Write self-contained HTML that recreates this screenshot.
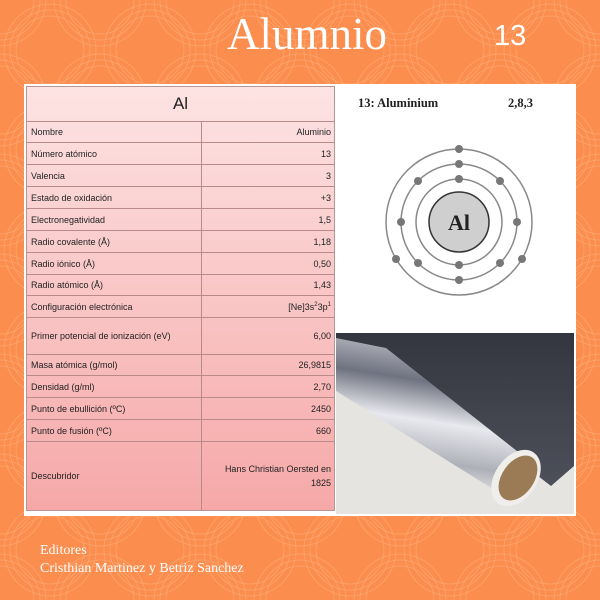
<!DOCTYPE html>
<html><head><meta charset="utf-8"><style>
*{margin:0;padding:0;box-sizing:border-box}
body{width:600px;height:600px;overflow:hidden;background:#fb8e4e;position:relative;font-family:"Liberation Sans",sans-serif}
.bg{position:absolute;inset:0}
.t{position:absolute;color:#fff;font-family:"Liberation Serif",serif}
.panel{position:absolute;left:24px;top:84px;width:552px;height:432px;background:#fff}
.tbl{position:absolute;left:26px;top:86px;width:309px;height:425px;background:linear-gradient(#fde3e3,#f6a8a8);border:1px solid #b79595}
.r{position:absolute;left:0;width:307px;border-top:1px solid #b98a8a;font-size:9px;color:#222}
.r span{position:absolute;top:50%;transform:translateY(-50%)}
.r .a{left:4px}.r .b{right:3px;text-align:right}
.div{position:absolute;left:174px;top:35px;bottom:0;border-left:1px solid #b98a8a}
</style></head><body>
<svg class="bg" width="600" height="600">
<defs><pattern id="p" width="100" height="100" patternUnits="userSpaceOnUse">
<g fill="none" stroke="#fca46d" stroke-width="0.8">
<circle cx="50" cy="50" r="34"/><circle cx="50" cy="50" r="40"/><circle cx="50" cy="50" r="46"/>
<circle cx="0" cy="0" r="34"/><circle cx="0" cy="0" r="40"/><circle cx="0" cy="0" r="46"/>
<circle cx="100" cy="0" r="34"/><circle cx="100" cy="0" r="40"/><circle cx="100" cy="0" r="46"/>
<circle cx="0" cy="100" r="34"/><circle cx="0" cy="100" r="40"/><circle cx="0" cy="100" r="46"/>
<circle cx="100" cy="100" r="34"/><circle cx="100" cy="100" r="40"/><circle cx="100" cy="100" r="46"/>
</g></pattern></defs>
<rect width="600" height="600" fill="url(#p)"/>
</svg>
<div class="t" style="left:227px;top:8px;font-size:45px">Alumnio</div>
<div class="t" style="left:494px;top:20px;font-size:29px;font-family:'Liberation Sans',sans-serif">13</div>
<div class="panel"></div>
<div class="tbl">
<div style="position:absolute;left:0;width:307px;top:0;height:34px;text-align:center;font-size:17px;line-height:34px;color:#222">Al</div>
<div class="div"></div>
<div class="r" style="top:34px;height:21px"><span class="a">Nombre</span><span class="b">Aluminio</span></div>
<div class="r" style="top:55px;height:22px"><span class="a">Número  atómico</span><span class="b">13</span></div>
<div class="r" style="top:77px;height:22px"><span class="a">Valencia</span><span class="b">3</span></div>
<div class="r" style="top:99px;height:22px"><span class="a">Estado de oxidación</span><span class="b">+3</span></div>
<div class="r" style="top:121px;height:22px"><span class="a">Electronegatividad</span><span class="b">1,5</span></div>
<div class="r" style="top:143px;height:22px"><span class="a">Radio covalente (Å)</span><span class="b">1,18</span></div>
<div class="r" style="top:165px;height:22px"><span class="a">Radio iónico (Å)</span><span class="b">0,50</span></div>
<div class="r" style="top:187px;height:21px"><span class="a">Radio atómico (Å)</span><span class="b">1,43</span></div>
<div class="r" style="top:208px;height:22px"><span class="a">Configuración electrónica</span><span class="b">[Ne]3s<sup style="font-size:6px">2</sup>3p<sup style="font-size:6px">1</sup></span></div>
<div class="r" style="top:230px;height:37px"><span class="a">Primer potencial de ionización (eV)</span><span class="b">6,00</span></div>
<div class="r" style="top:267px;height:21px"><span class="a">Masa atómica (g/mol)</span><span class="b">26,9815</span></div>
<div class="r" style="top:288px;height:22px"><span class="a">Densidad (g/ml)</span><span class="b">2,70</span></div>
<div class="r" style="top:310px;height:22px"><span class="a">Punto de ebullición (ºC)</span><span class="b">2450</span></div>
<div class="r" style="top:332px;height:22px"><span class="a">Punto de fusión (ºC)</span><span class="b">660</span></div>
<div class="r" style="top:354px;height:69px"><span class="a">Descubridor</span><span class="b" style="width:120px;line-height:14px">Hans Christian Oersted en 1825</span></div>
</div>
<svg style="position:absolute;left:336px;top:86px" width="238" height="428">
<text x="22" y="21" font-family="Liberation Serif" font-weight="bold" font-size="12.5" fill="#222">13: Aluminium</text>
<text x="172" y="21" font-family="Liberation Serif" font-weight="bold" font-size="12.5" fill="#222">2,8,3</text>
<g fill="none" stroke="#888" stroke-width="1.5"><circle cx="123" cy="136" r="43"/><circle cx="123" cy="136" r="58"/><circle cx="123" cy="136" r="73"/></g>
<circle cx="123" cy="136" r="30" fill="#cfcfcf" stroke="#333" stroke-width="1.5"/>
<text x="123" y="144" text-anchor="middle" font-family="Liberation Serif" font-weight="bold" font-size="22" fill="#222">Al</text>
<g fill="#777">
<circle cx="123" cy="93" r="4"/><circle cx="123" cy="179" r="4"/>
<circle cx="123" cy="78" r="4"/><circle cx="123" cy="194" r="4"/><circle cx="65" cy="136" r="4"/><circle cx="181" cy="136" r="4"/>
<circle cx="82" cy="95" r="4"/><circle cx="164" cy="95" r="4"/><circle cx="82" cy="177" r="4"/><circle cx="164" cy="177" r="4"/>
<circle cx="123" cy="63" r="4"/><circle cx="60" cy="173" r="4"/><circle cx="186" cy="173" r="4"/>
</g>
<defs>
<linearGradient id="bk" x1="0" y1="0" x2="0" y2="1"><stop offset="0" stop-color="#34363f"/><stop offset="1" stop-color="#4d505a"/></linearGradient>
<linearGradient id="foil" x1="0.6" y1="0" x2="0.4" y2="1"><stop offset="0" stop-color="#c9cbd2"/><stop offset="0.3" stop-color="#6f7280"/><stop offset="0.55" stop-color="#e8e9ee"/><stop offset="0.8" stop-color="#aeb0b8"/><stop offset="1" stop-color="#f2f2f4"/></linearGradient>
</defs>
<rect x="0" y="247" width="238" height="181" fill="#e6e4e0"/>
<polygon points="0,247 238,247 238,380 215,400 40,265 0,260" fill="url(#bk)"/>
<polygon points="0,252 50,262 200,380 160,405 0,305" fill="url(#foil)"/>
<ellipse cx="180" cy="392" rx="21" ry="31" transform="rotate(35 180 392)" fill="#f0eeea"/>
<ellipse cx="182" cy="392" rx="16" ry="25" transform="rotate(35 182 392)" fill="#9a7b55"/>
</svg>
<div class="t" style="left:40px;top:543px;font-size:14px">Editores</div>
<div class="t" style="left:40px;top:561px;font-size:14px">Cristhian Martinez y Betriz Sanchez</div>
</body></html>
